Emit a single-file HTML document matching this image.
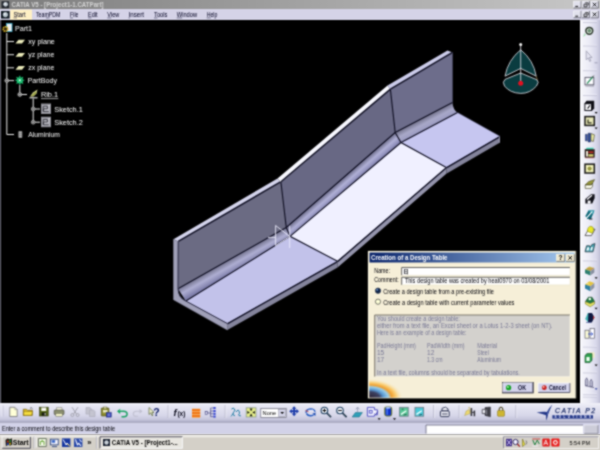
<!DOCTYPE html>
<html lang="en">
<head>
<meta charset="utf-8">
<title>CATIA V5 - [Project1-1.CATPart]</title>
<style>
html,body{margin:0;padding:0;background:#000;overflow:hidden}
body{width:600px;height:450px;position:relative;font-family:"Liberation Sans",sans-serif}
svg{position:absolute;left:0;top:0;display:block;overflow:hidden}
#all{filter:url(#blr)}
text{font-family:"Liberation Sans",sans-serif}
.t{font-size:6.6px;fill:#000020}
.tw{font-size:7.3px;fill:#fafafa}
.tg{font-size:6.6px;fill:#787894}
.td{font-size:6.8px;fill:#000008}
</style>
</head>
<body>
<svg width="600" height="450" viewBox="0 0 600 450">
<defs>
<filter id="blr" filterUnits="userSpaceOnUse" x="-5" y="-5" width="610" height="460" color-interpolation-filters="sRGB"><feConvolveMatrix order="3" kernelMatrix="1 2 1 2 6 2 1 2 1" divisor="18" edgeMode="duplicate" preserveAlpha="true"/></filter>
<linearGradient id="gtitle" x1="0" x2="1" y1="0" y2="0"><stop offset="0" stop-color="#7c7c7c"/><stop offset="1" stop-color="#c8c8c8"/></linearGradient>
<linearGradient id="gdlg" x1="0" x2="1" y1="0" y2="0"><stop offset="0" stop-color="#0a246a"/><stop offset="1" stop-color="#a6caf0"/></linearGradient>
<linearGradient id="gtb" x1="0" x2="0" y1="0" y2="1"><stop offset="0" stop-color="#f0f0f8"/><stop offset="0.250" stop-color="#e2e2f0"/><stop offset="0.600" stop-color="#d8d8ea"/><stop offset="0.800" stop-color="#c8c8de"/><stop offset="0.900" stop-color="#b8b8d0"/><stop offset="0.960" stop-color="#a0a0b8"/><stop offset="1" stop-color="#c4c4d8"/></linearGradient>
<linearGradient id="grt" x1="0" x2="1" y1="0" y2="0"><stop offset="0" stop-color="#f8f8fc"/><stop offset="0.450" stop-color="#ececf6"/><stop offset="0.800" stop-color="#d8d8ea"/><stop offset="1" stop-color="#c2c2d8"/></linearGradient>
<radialGradient id="gicon" gradientUnits="userSpaceOnUse" cx="369.2" cy="397.600" r="34" gradientTransform="translate(0 397.600) scale(1 0.560) translate(0 -397.600)">
<stop offset="0" stop-color="#2c2434"/><stop offset="0.300" stop-color="#3c4060"/><stop offset="0.420" stop-color="#5898d0"/><stop offset="0.560" stop-color="#98cce8"/><stop offset="0.660" stop-color="#f0a030"/><stop offset="0.800" stop-color="#fad078"/><stop offset="1" stop-color="#f6efd8" stop-opacity="0"/>
</radialGradient>
<linearGradient id="fg0" gradientUnits="userSpaceOnUse" x1="178.00" y1="288.70" x2="183.91" y2="299.16"><stop offset="0" stop-color="#7a7a96"/><stop offset="0.2" stop-color="#8a8aa8"/><stop offset="0.5" stop-color="#aeaed2"/><stop offset="0.8" stop-color="#9494bc"/><stop offset="1" stop-color="#8080ac"/></linearGradient>
<linearGradient id="fg1" gradientUnits="userSpaceOnUse" x1="286.30" y1="227.50" x2="293.01" y2="235.19"><stop offset="0" stop-color="#747492"/><stop offset="0.2" stop-color="#8686a6"/><stop offset="0.5" stop-color="#b0b0d6"/><stop offset="0.8" stop-color="#9898c2"/><stop offset="1" stop-color="#8484b0"/></linearGradient>
<linearGradient id="fg2" gradientUnits="userSpaceOnUse" x1="395.20" y1="132.50" x2="400.47" y2="142.57"><stop offset="0" stop-color="#76768e"/><stop offset="0.2" stop-color="#8686a2"/><stop offset="0.5" stop-color="#a8a8c8"/><stop offset="0.8" stop-color="#a0a0c4"/><stop offset="1" stop-color="#9898c0"/></linearGradient>
</defs>
<g id="all">

<!-- viewport -->
<rect x="-5" y="20" width="585" height="383" fill="#000"/>
<rect x="0" y="20" width="1" height="383" fill="#808090"/>

<!-- title bar -->
<rect x="0" y="-5" width="600" height="14" fill="url(#gtitle)"/><rect x="-5" y="-5" width="5.500" height="14" fill="#7c7c7c"/><rect x="599.500" y="-5" width="6" height="14" fill="#c8c8c8"/>
<rect x="1.500" y="1.200" width="7.600" height="7" fill="#20242c"/>
<circle cx="5.600" cy="4.300" r="2.400" fill="#c0c8d0"/><circle cx="5" cy="3.800" r="1" fill="#f0f4f8"/>
<text x="11.500" y="7.100" font-size="6.600" font-weight="bold" fill="#d4d4d4" textLength="92" lengthAdjust="spacingAndGlyphs">CATIA V5 - [Project1-1.CATPart]</text>
<g id="winbtn1">
<rect x="573.5" y="1.2" width="7.600" height="6.800" fill="#e0e0ec"/>
<path d="M573.5 8.0v-6.800h7.600" fill="none" stroke="#fcfcff" stroke-width="0.600"/>
<path d="M573.5 8.0h7.600v-6.800" fill="none" stroke="#484854" stroke-width="0.700"/>
<rect x="582" y="1.2" width="7.600" height="6.800" fill="#e0e0ec"/>
<path d="M582 8.0v-6.800h7.600" fill="none" stroke="#fcfcff" stroke-width="0.600"/>
<path d="M582 8.0h7.600v-6.800" fill="none" stroke="#484854" stroke-width="0.700"/>
<rect x="590.8" y="1.2" width="7.600" height="6.800" fill="#e0e0ec"/>
<path d="M590.8 8.0v-6.800h7.600" fill="none" stroke="#fcfcff" stroke-width="0.600"/>
<path d="M590.8 8.0h7.600v-6.800" fill="none" stroke="#484854" stroke-width="0.700"/>
<path d="M575.300 6.4h2.800" stroke="#000" stroke-width="0.900"/>
<path d="M584 4.2h3v2.600h-3z M585.200 2.8h3v2.600" fill="none" stroke="#000" stroke-width="0.700"/>
<path d="M592.800 2.8l3.600 3.600M596.400 2.8l-3.600 3.600" stroke="#000" stroke-width="0.900"/>
</g>

<!-- menu bar -->
<rect x="-5" y="9" width="610" height="11" fill="#d5d3e7"/>
<rect x="1" y="11" width="8.600" height="7.600" fill="#101820"/>
<circle cx="5.400" cy="14.600" r="2.600" fill="#b8c4cc"/><circle cx="4.800" cy="14" r="1" fill="#f0f4f8"/>
<rect x="10.200" y="9.600" width="21.800" height="10.200" fill="#fff0c4"/>
<g class="t">
<text x="13.5" y="17" textLength="12" lengthAdjust="spacingAndGlyphs">Start</text>
<text x="36" y="17" textLength="24.5" lengthAdjust="spacingAndGlyphs">TeamPDM</text>
<text x="70" y="17" textLength="8.5" lengthAdjust="spacingAndGlyphs">File</text>
<text x="88" y="17" textLength="9.5" lengthAdjust="spacingAndGlyphs">Edit</text>
<text x="107.3" y="17" textLength="12" lengthAdjust="spacingAndGlyphs">View</text>
<text x="128.5" y="17" textLength="15.5" lengthAdjust="spacingAndGlyphs">Insert</text>
<text x="154" y="17" textLength="13.5" lengthAdjust="spacingAndGlyphs">Tools</text>
<text x="176.7" y="17" textLength="20.5" lengthAdjust="spacingAndGlyphs">Window</text>
<text x="206.7" y="17" textLength="10.7" lengthAdjust="spacingAndGlyphs">Help</text>
</g>
<g stroke="#101030" stroke-width="0.5">
<path d="M13.5 18h3.5M46 18h3.5M70 18h3M88 18h3.5M107.3 18h4M128.5 18h1.5M154 18h3.5M176.7 18h5.5M206.7 18h4"/>
</g>
<g id="winbtn2">
<rect x="573.5" y="11" width="7.600" height="6.800" fill="#e0e0ec"/>
<path d="M573.5 17.8v-6.800h7.600" fill="none" stroke="#fcfcff" stroke-width="0.600"/>
<path d="M573.5 17.8h7.600v-6.800" fill="none" stroke="#484854" stroke-width="0.700"/>
<rect x="582" y="11" width="7.600" height="6.800" fill="#e0e0ec"/>
<path d="M582 17.8v-6.800h7.600" fill="none" stroke="#fcfcff" stroke-width="0.600"/>
<path d="M582 17.8h7.600v-6.800" fill="none" stroke="#484854" stroke-width="0.700"/>
<rect x="590.8" y="11" width="7.600" height="6.800" fill="#e0e0ec"/>
<path d="M590.8 17.8v-6.800h7.600" fill="none" stroke="#fcfcff" stroke-width="0.600"/>
<path d="M590.8 17.8h7.600v-6.800" fill="none" stroke="#484854" stroke-width="0.700"/>
<path d="M575.300 16.2h2.800" stroke="#000" stroke-width="0.900"/>
<path d="M584 14h3v2.600h-3z M585.200 12.6h3v2.600" fill="none" stroke="#000" stroke-width="0.700"/>
<path d="M592.800 12.6l3.600 3.600M596.400 12.6l-3.600 3.600" stroke="#000" stroke-width="0.900"/>
</g>

<!-- 3D model -->
<g id="model">
<polygon points="178.20,241.60 280.90,182.00 286.30,227.50 178.00,288.70" fill="#6b6b83"/>
<polygon points="178.00,288.70 286.30,227.50 290.00,236.30 185.80,301.00" fill="url(#fg0)"/>
<polygon points="185.80,301.00 290.00,236.30 337.50,261.30 227.30,323.50" fill="#c2c2ea"/>
<polygon points="227.30,323.50 337.50,261.30 337.50,267.60 227.30,330.00" fill="#84849c"/>
<polygon points="173.50,239.30 277.50,178.50 280.90,182.00 178.20,241.60" fill="#d4d4ec"/>
<line x1="178.2" y1="241.29999999999998" x2="280.9" y2="181.7" stroke="#101024" stroke-width="1.4"/>
<line x1="178.0" y1="288.7" x2="286.3" y2="227.5" stroke="#101024" stroke-width="1.1"/>
<line x1="185.8" y1="301.0" x2="290.0" y2="236.3" stroke="#101024" stroke-width="1.1"/>
<line x1="227.3" y1="323.8" x2="337.5" y2="261.6" stroke="#101024" stroke-width="1.4"/>
<polygon points="280.90,182.00 390.40,89.40 395.20,132.50 286.30,227.50" fill="#686884"/>
<polygon points="286.30,227.50 395.20,132.50 401.00,142.50 290.00,236.30" fill="url(#fg1)"/>
<polygon points="290.00,236.30 401.00,142.50 446.30,167.50 337.50,261.30" fill="#f0f0ff"/>
<polygon points="337.50,261.30 446.30,167.50 446.30,173.80 337.50,267.60" fill="#9494ac"/>
<polygon points="277.50,178.50 387.50,85.50 390.40,89.40 280.90,182.00" fill="#f8f8ff"/>
<line x1="280.9" y1="181.7" x2="390.4" y2="89.10000000000001" stroke="#101024" stroke-width="1.4"/>
<line x1="286.3" y1="227.5" x2="395.2" y2="132.5" stroke="#101024" stroke-width="1.1"/>
<line x1="290.0" y1="236.3" x2="401.0" y2="142.5" stroke="#101024" stroke-width="1.1"/>
<line x1="337.5" y1="261.6" x2="446.3" y2="167.8" stroke="#101024" stroke-width="1.4"/>
<polygon points="390.40,89.40 452.50,52.60 452.50,102.50 395.20,132.50" fill="#6d6d8b"/>
<polygon points="395.20,132.50 452.50,102.50 457.50,112.50 401.00,142.50" fill="url(#fg2)"/>
<polygon points="401.00,142.50 457.50,112.50 500.00,136.30 446.30,167.50" fill="#c6c6f0"/>
<polygon points="446.30,167.50 500.00,136.30 500.00,142.60 446.30,173.80" fill="#84849c"/>
<polygon points="387.50,85.50 447.50,50.50 452.50,52.60 390.40,89.40" fill="#ccccea"/>
<line x1="390.4" y1="89.10000000000001" x2="452.5" y2="52.300000000000004" stroke="#101024" stroke-width="1.4"/>
<line x1="395.2" y1="132.5" x2="452.5" y2="102.5" stroke="#101024" stroke-width="1.1"/>
<line x1="401.0" y1="142.5" x2="457.5" y2="112.5" stroke="#101024" stroke-width="1.1"/>
<line x1="446.3" y1="167.8" x2="500.0" y2="136.60000000000002" stroke="#101024" stroke-width="1.4"/>
<path d="M173.5,239.3 L178.2,241.6 L178.0,288.7 Q178.5,298.0 185.8,301.0 L227.3,323.5 L227.3,330.0 L173.5,299.7 Z" fill="#a0a0b8" stroke="#8a8aa2" stroke-width="0.5"/>
<path d="M178.2,241.6 L178.0,288.7 Q178.5,298.0 185.8,301.0 L227.3,323.5" fill="none" stroke="#20203a" stroke-width="0.9"/>
<polygon points="500.00,136.30 500.00,142.60 499.20,142.60 499.20,136.30" fill="#9a9ab2"/>
<polyline points="280.90,182.00 286.30,227.50 290.00,236.30 337.50,261.30" fill="none" stroke="#101024" stroke-width="1.1"/>
<polyline points="390.40,89.40 395.20,132.50 401.00,142.50 446.30,167.50" fill="none" stroke="#101024" stroke-width="1.1"/>
<polyline points="452.50,52.60 452.50,102.50 457.50,112.50 500.00,136.30" fill="none" stroke="#505070" stroke-width="0.5"/>
<g fill="none" stroke="#f0f0ff" stroke-width="0.9" opacity="0.95"><path d="M275.6 225.5V245.6M289.7 225.8V248M275.6 225.5L289.7 236.4L275.6 245.6M268 237.4H275.6"/></g>
<path d="M452.5,102.5 Q453.1,110.0 457.5,112.5 L458.5,111.5 L453.5,102.5 Z" fill="#000"/>
</g>


<!-- spec tree -->
<g id="tree">
<g stroke="#e8e8e8" stroke-width="1" fill="none">
<path d="M6.8 33V134.5H14"/>
<path d="M6.8 41.5H14M6.8 54.7H14M6.8 67.8H14M6.8 80.6H14"/>
<path d="M19.8 85V94.5H27"/>
<path d="M33.2 98.5V122.2H40M33.2 109H40"/>
</g>
<!-- Part1 icon -->
<rect x="6.5" y="23.5" width="5.5" height="8" fill="#f0f0f0" stroke="#40b0d0" stroke-width="0.8"/>
<circle cx="5.400" cy="29" r="2.300" fill="#302810" stroke="#dcb428" stroke-width="1.500" stroke-dasharray="1.300 0.500"/>
<text class="tw" x="15" y="30.6" textLength="17" lengthAdjust="spacingAndGlyphs">Part1</text>
<!-- planes -->
<g fill="#e8e8b8">
<polygon points="15.5,43.5 18.5,39.8 25,39.8 22,43.5"/>
<polygon points="15.5,56.7 18.5,53 25,53 22,56.7"/>
<polygon points="15.5,69.8 18.5,66.1 25,66.1 22,69.8"/>
</g>
<text class="tw" x="28.3" y="43.7" textLength="26.5" lengthAdjust="spacingAndGlyphs">xy plane</text>
<text class="tw" x="28.3" y="56.9" textLength="26" lengthAdjust="spacingAndGlyphs">yz plane</text>
<text class="tw" x="28.3" y="70" textLength="26" lengthAdjust="spacingAndGlyphs">zx plane</text>
<!-- PartBody -->
<circle cx="6.8" cy="80.6" r="1.9" fill="#606060" stroke="#d0d0d0" stroke-width="0.7"/>
<path d="M5.6 80.6h2.4" stroke="#e0e0e0" stroke-width="0.6"/>
<g stroke="#20c878" stroke-width="1.1" fill="none">
<circle cx="19.8" cy="80.3" r="2.6"/>
<path d="M19.8 75.8v9M15.3 80.3h9M16.6 77.1l6.4 6.4M23 77.1l-6.4 6.4"/>
</g>
<circle cx="19.8" cy="80.3" r="1" fill="#e8fff0"/>
<text class="tw" x="27.5" y="83" textLength="29.5" lengthAdjust="spacingAndGlyphs">PartBody</text>
<!-- Rib.1 -->
<circle cx="19.8" cy="94.5" r="1.9" fill="#606060" stroke="#d0d0d0" stroke-width="0.7"/>
<path d="M18.6 94.5h2.4" stroke="#e0e0e0" stroke-width="0.6"/>
<polygon points="30,96.5 33,92.5 37.5,89.5 36.5,93.5 33.5,96.5" fill="#dcdc98"/>
<polygon points="31,96 33.800,93 36.600,91.200 36,93.500 33.500,95.800" fill="#98a040"/>
<path d="M29.5 97.8h8" stroke="#f0f0f0" stroke-width="1.1"/>
<text class="tw" x="41" y="97" textLength="17" lengthAdjust="spacingAndGlyphs">Rib.1</text>
<path d="M41 98.6h17.3" stroke="#e0e0e0" stroke-width="0.7"/>
<!-- Sketch.1/2 -->
<g id="sk">
<circle cx="33.2" cy="109" r="1.9" fill="#303030" stroke="#d0d0d0" stroke-width="0.7"/>
<path d="M32 109h2.4M33.2 107.8v2.4" stroke="#e0e0e0" stroke-width="0.6"/>
<rect x="41" y="103.5" width="10" height="10.5" fill="#8c8c94"/>
<rect x="42.2" y="105" width="7.6" height="7.8" fill="#b8b8c0"/>
<path d="M43.2 111.6v-5.4h4.2v2.6h-4v2.8h5.4" fill="none" stroke="#303038" stroke-width="0.9"/>
<path d="M48.5 106l1.2-1.2" stroke="#f0f0f0" stroke-width="0.8"/>
</g>
<use href="#sk" y="13.2"/>
<text class="tw" x="54.3" y="111.5" textLength="28.5" lengthAdjust="spacingAndGlyphs">Sketch.1</text>
<text class="tw" x="54.3" y="124.7" textLength="28.5" lengthAdjust="spacingAndGlyphs">Sketch.2</text>
<!-- Aluminium -->
<rect x="18.3" y="131" width="4" height="7" rx="1" fill="#8a8a8a"/>
<path d="M19 132.5h2.6M19 134.5h2.6M19 136.5h2.6" stroke="#c8c8c8" stroke-width="0.6"/>
<text class="tw" x="28.3" y="137.2" textLength="31.5" lengthAdjust="spacingAndGlyphs">Aluminium</text>
</g>


<!-- compass -->
<g id="compass" stroke="#e8e8f0" stroke-width="0.800" stroke-linejoin="round">
<path d="M520.700 49.800Q508 60 505 76.200L520.700 68.400L536.200 76.200Q533.500 60 520.700 49.800Z" fill="#0a3c40"/>
<path d="M505 79.400L520.700 73L537 79.800Q539.500 82 536.500 86Q530 93.500 520.700 93.400Q510 93 504.500 86Q502 82 505 79.400Z" fill="#0a3c40"/>
<path d="M520.700 45V83" fill="none"/>
<path d="M536.200 76.200l1.200 3.600" fill="none" stroke="#c0a060" stroke-width="0.600"/>
</g>
<circle cx="520.700" cy="44.600" r="1.500" fill="#f4f4f4"/>
<circle cx="520.700" cy="83.200" r="2.500" fill="#e01020"/>

<!-- right toolbar -->
<rect x="580" y="20" width="20" height="383" fill="url(#grt)"/><rect x="599.500" y="20" width="6" height="383" fill="#c2c2d8"/>



<g id="rtools">
<path d="M583 21.800h14" stroke="#f8f8ff" stroke-width="0.700"/><path d="M583 22.500h14" stroke="#a8a8c0" stroke-width="0.500"/>
<!-- workbench gear -->
<circle cx="589.300" cy="30.800" r="3.400" fill="#e0f0e0" stroke="#283428" stroke-width="1.500"/>
<circle cx="589.300" cy="30.800" r="1.300" fill="#70b080" stroke="#283428" stroke-width="0.600"/>
<path d="M584.500 33l-1.500 4 3-2z" fill="#a8e0b8"/>
<path d="M583 45.300h14" stroke="#f8f8ff" stroke-width="0.700"/><path d="M583 46h14" stroke="#a8a8c0" stroke-width="0.500"/>
<!-- select -->
<path d="M586.200 50.800v9l2-1.800 1.500 3.400 1.200-.6-1.500-3.300h2.600z" fill="#e4e4f0" stroke="#9c9cb0" stroke-width="0.800"/>
<path d="M594.500 62.800h3" stroke="#9090a8" stroke-width="0.800"/>
<path d="M583 70h14" stroke="#f8f8ff" stroke-width="0.700"/><path d="M583 70.700h14" stroke="#a8a8c0" stroke-width="0.500"/>
<!-- sketcher -->
<rect x="585" y="77.400" width="8.800" height="7.400" fill="#fcfcff" stroke="#585868" stroke-width="0.900"/>
<path d="M587 83.600l5.600-6.600" stroke="#309060" stroke-width="1.300"/>
<path d="M592.200 77.400l1.600-1.800" stroke="#404040" stroke-width="1"/>
<path d="M585.400 86h8.600" stroke="#787888" stroke-width="0.700"/>
<path d="M583 94.800h14" stroke="#f8f8ff" stroke-width="0.700"/><path d="M583 95.500h14" stroke="#a8a8c0" stroke-width="0.500"/>
<!-- pad -->
<path d="M586.600 100.800h7.600v7.600l-2.400 2.600h-7.400v-7.400z" fill="#101018"/>
<path d="M585.400 104.200h5.600v5.800h-5.600z" fill="#fcfcff"/>
<path d="M587.600 108.600l2.400-3.400" stroke="#101018" stroke-width="1.100"/>
<path d="M594.600 112h3l-1.500 1.700z" fill="#000"/>
<!-- pocket -->
<rect x="585" y="116.600" width="9.300" height="8.800" fill="#e8e8b8" stroke="#181818" stroke-width="1.500"/>
<path d="M588 119.500v3.300h3.600" fill="none" stroke="#282818" stroke-width="1.200"/>
<path d="M594.600 127.600h3l-1.500 1.700z" fill="#000"/>
<!-- shaft -->
<path d="M585.400 134.400h2v6.400h-2z" fill="#3858b0" stroke="#182040" stroke-width="0.500"/>
<path d="M588.200 133.200h2.200v8.800h-2.200z" fill="#2848a0" stroke="#182040" stroke-width="0.500"/>
<path d="M591 133.600l3.400 1.200-1 6.600-2.400-.6z" fill="#f0f0a8" stroke="#303020" stroke-width="0.600"/>
<!-- groove -->
<path d="M585.400 149.800l1.400-2h7l-1 2z" fill="#40d0b0"/>
<rect x="585" y="149.600" width="9.300" height="8" fill="#281c18" stroke="#181010" stroke-width="0.500"/>
<path d="M586 151h2v5.600h-2z" fill="#e8e0d0"/>
<path d="M588.400 151.400h5v1.600h-5z" fill="#c03028"/>
<path d="M588.400 154.200h5v2.400h-5z" fill="#d8d070"/>
<path d="M585 158h9.300" stroke="#f08080" stroke-width="0.500"/>
<!-- hole -->
<rect x="585" y="164.200" width="9.300" height="8.800" fill="#f0f0b8" stroke="#181818" stroke-width="1.500"/>
<circle cx="589.600" cy="168.600" r="1.700" fill="#a0a040" stroke="#606020" stroke-width="0.500"/>
<!-- rib -->
<path d="M585.200 185l3.400-3.400 6-2-2 3.600-1.400 1.800z" fill="#98983c" stroke="#303010" stroke-width="0.500"/>
<path d="M585.200 185h6l1.400-1.800v3l-1.400 2.200h-6z" fill="#fcfcf0" stroke="#303010" stroke-width="0.600"/>
<!-- slot -->
<path d="M585.400 203.600v-4.600l5.600-4.800h3.600v4l-2.400 5.400z" fill="#101018"/>
<path d="M587 199.400l5-4.200" stroke="#fcfcff" stroke-width="1.300"/>
<rect x="587.600" y="200.600" width="3" height="3" fill="#fcfcff"/>
<!-- stiffener -->
<path d="M585.400 216l3-5.400h6l-3.400 8.400h-4z" fill="#106878"/>
<path d="M588 210.600h6.400l-1.400 3.600z" fill="#30a0b0"/>
<path d="M586 218.600l6.400-7.200" stroke="#fcfcff" stroke-width="1.200"/>
<path d="M589 219h3.400" stroke="#101018" stroke-width="1"/>
<!-- loft -->
<path d="M585 235.600l3.600-6.400h6.400l-3.600 6.400z" fill="#fcfcff" stroke="#282828" stroke-width="0.700"/>
<path d="M587.400 231.400q0-5 3.600-5.200q3 0.400 2.600 4.400l-1.400 2.600z" fill="#e8e828" stroke="#787810" stroke-width="0.500"/>
<!-- removed loft -->
<path d="M585 251.800l1.600-6h3l.6 1.600 1.600-2.800 3.200-1-2 8.200z" fill="#48a8b8" stroke="#182830" stroke-width="0.700"/>
<path d="M586.400 250.600l1-3.400h1.800l-.6 3.400z M590.400 250.600l.8-3.600h1.600l-.8 3.600z" fill="#fcfcff"/>
<path d="M583 260.200h14" stroke="#f8f8ff" stroke-width="0.700"/><path d="M583 260.900h14" stroke="#a8a8c0" stroke-width="0.500"/>
<!-- edge fillet -->
<path d="M585 269.400l4.400-2.900 5 1.700-4 2.800z" fill="#c4b448"/>
<path d="M585 269.400l5.400 1.600v4.600l-5.400-2.400z" fill="#308070"/>
<path d="M590.400 271l4-2.800v4.200l-4 3.200z" fill="#8890a0"/>
<path d="M587 268l3.600 1.800 3-2" fill="none" stroke="#d07050" stroke-width="0.600"/>
<path d="M594.600 277.300h3l-1.500 1.700z" fill="#000"/>
<!-- chamfer -->
<path d="M585 284.600l4.400-3.400 5 1.800-4 3.200z" fill="#e4c440"/>
<path d="M585 284.600l5.400 1.600v5l-5.400-2.600z" fill="#3080a0"/>
<path d="M590.400 286.200l4-3.200v4.600l-4 3.600z" fill="#8c94a4"/>
<path d="M586.400 283.400l3 .6" stroke="#f8e890" stroke-width="0.900"/>
<!-- draft -->
<path d="M585.400 301.600l3-4.400h3.600l2.600 4.400-4.400 2z" fill="#207840" stroke="#103018" stroke-width="0.500"/>
<circle cx="589.800" cy="299" r="1.300" fill="#f4fff4"/>
<path d="M585.400 301.600l4.800 2 4.400-2v2.400l-4.400 2.800-4.800-2.800z" fill="#e4e460" stroke="#606020" stroke-width="0.500"/>
<path d="M594.600 307.800h3l-1.500 1.700z" fill="#000"/>
<!-- shell -->
<path d="M585.200 319l2.600-6h2.400l-2.200 9z" fill="#40b0b0"/>
<path d="M588.400 313h3.600l2.400 4.200-2.600 5.200h-3.800z" fill="#101840"/>
<path d="M593 315.400l1.600 2-1.400 2.400z" fill="#c03030"/>
<path d="M586 322.400h5" stroke="#5060a0" stroke-width="0.800"/>
<!-- thickness -->
<rect x="585" y="330.200" width="4" height="8" fill="#fcfcd8" stroke="#606070" stroke-width="0.700"/>
<rect x="590" y="328.400" width="4.400" height="9.800" fill="#fcfcff" stroke="#606070" stroke-width="0.700"/>
<path d="M588 334h4.600M591.200 332.600l1.600 1.400-1.600 1.400" fill="none" stroke="#2040c0" stroke-width="0.800"/>
<path d="M583 346.400h14" stroke="#f8f8ff" stroke-width="0.700"/><path d="M583 347.100h14" stroke="#a8a8c0" stroke-width="0.500"/>
<!-- green cube -->
<path d="M588.600 352.400h5.800v5.400h-5.800z" fill="#f0f0c0"/>
<path d="M585 355.400l2-1.800h5v6.600l-2 2.400h-5z" fill="#30a050" stroke="#104020" stroke-width="0.600"/>
<path d="M586.400 357h3.200v4h-3.200z" fill="#f4fff4"/>
<path d="M594.600 364.600h3l-1.500 1.700z" fill="#000"/>
<path d="M583 372.200h14" stroke="#f8f8ff" stroke-width="0.700"/><path d="M583 372.900h14" stroke="#a8a8c0" stroke-width="0.500"/>
<!-- disabled -->
<g fill="#c8c8dc" stroke="#606080" stroke-width="0.800">
<path d="M585.400 385.600v-5.400l1.200-2.400 1.200 2.400v5.400z"/>
<path d="M590 386.600v-5l1.200-2.200 1.200 2.200v5z"/>
<path d="M585 385.600l9 2"/>
</g>
<path d="M594.600 388.200h3l-1.500 1.700z" fill="#3848a0"/>
<path d="M583 394h14" stroke="#f8f8ff" stroke-width="0.700"/><path d="M583 394.700h14" stroke="#a8a8c0" stroke-width="0.500"/>
<path d="M583 396.400h14" stroke="#f8f8ff" stroke-width="0.700"/><path d="M583 397.100h14" stroke="#a8a8c0" stroke-width="0.500"/>
</g>

<!-- bottom toolbar -->
<rect x="-5" y="403" width="610" height="20" fill="url(#gtb)"/>

<!-- bottom toolbar icons -->
<g id="btools">
<path d="M2.2 405.5v11" stroke="#f8f8ff" stroke-width="0.8"/><path d="M3 405.5v11" stroke="#a0a0b8" stroke-width="0.5"/>
<!-- new -->
<path d="M9.8 407.3h5l2.4 2.4v6.8h-7.4z" fill="#ffffd8" stroke="#606068" stroke-width="0.7"/>
<path d="M14.8 407.3v2.4h2.4" fill="none" stroke="#808088" stroke-width="0.5"/>
<!-- open -->
<path d="M23.3 409.3h3.2l1 1h4.8v5.2h-9z" fill="#e8c828" stroke="#705810" stroke-width="0.7"/>
<path d="M23.6 411.4h9l-1 4h-8z" fill="#f4dc40" stroke="#705810" stroke-width="0.5"/>
<path d="M30 408.2q1.6-1 2.6.6" fill="none" stroke="#202020" stroke-width="0.6"/>
<!-- save -->
<rect x="39.6" y="407.2" width="8.6" height="8.8" fill="#566818" stroke="#283008" stroke-width="0.6"/>
<rect x="41.3" y="407.6" width="5" height="3.4" fill="#f8f8f0"/>
<rect x="41.6" y="412.4" width="4.6" height="3.4" fill="#181c10"/>
<rect x="44.6" y="412.9" width="1.1" height="2.4" fill="#c8c8c0"/>
<!-- print -->
<path d="M56.5 407.5h5.5v3h-5.5z" fill="#f4f4e0" stroke="#707070" stroke-width="0.5"/>
<rect x="54.2" y="410" width="9.8" height="4.6" rx="0.8" fill="#8c9070" stroke="#404038" stroke-width="0.6"/>
<rect x="55.8" y="413.4" width="6.6" height="2.8" fill="#f4f4c8" stroke="#606050" stroke-width="0.5"/>
<!-- cut (disabled) -->
<g stroke="#a4a4b0" stroke-width="1" fill="none">
<path d="M72 407.2l4.6 7M78 407.2l-4.6 7"/>
<circle cx="72.4" cy="415" r="1.5"/><circle cx="77.6" cy="415" r="1.5"/>
</g>
<!-- copy (disabled) -->
<g fill="#c4c4d0" stroke="#a8a8b6" stroke-width="0.6">
<path d="M86 407.6h4l1.5 1.5v5h-5.5z"/><path d="M89.5 410h4l1.5 1.5v5h-5.5z"/>
</g>
<!-- paste -->
<rect x="101.3" y="408" width="7.6" height="8" rx="0.6" fill="#8c8c30" stroke="#404010" stroke-width="0.6"/>
<rect x="103.3" y="407" width="3.6" height="2" fill="#d8d8a0" stroke="#404010" stroke-width="0.4"/>
<rect x="103" y="410" width="4.5" height="2.5" fill="#e8e8c0"/>
<rect x="106.3" y="412.5" width="5" height="4.6" fill="#2838b0" stroke="#101860" stroke-width="0.4"/>
<path d="M107.3 414h3M107.3 415.4h3" stroke="#e0e0ff" stroke-width="0.5"/>
<!-- undo -->
<path d="M118 411.3h5.5q3.6 0 3.6 2.8t-3.6 2.6h-2" fill="none" stroke="#18a060" stroke-width="1.5"/>
<path d="M117 411.3l3.2-2.6v5.2z" fill="#18a060"/>
<path d="M119 410.3h4" stroke="#90e0b8" stroke-width="0.5"/>
<!-- redo (disabled) -->
<path d="M141.5 411.3h-5q-3.2 0-3.2 2.6t3.2 2.4h1.5" fill="none" stroke="#c0c0d0" stroke-width="1.100"/>
<path d="M142.5 411.3l-3-2.4v4.8z" fill="#c0c0d0"/>
<!-- what's this -->
<path d="M149 407.5v7l1.7-1.6 1.3 2.8 1-.5-1.2-2.7h2.2z" fill="#f0f0d0" stroke="#405020" stroke-width="0.6"/>
<text x="153.3" y="415.6" font-size="10.5" font-weight="bold" fill="#102068">?</text>
<path d="M168.2 405v13" stroke="#9898b0" stroke-width="0.6"/><path d="M168.9 405v13" stroke="#f8f8ff" stroke-width="0.6"/>
<!-- f(x) -->
<text x="173.6" y="415.8" font-size="9.5" font-weight="bold" font-style="italic" fill="#080818" font-family="Liberation Serif, serif">f</text>
<text x="177.4" y="416" font-size="6.5" font-weight="bold" fill="#080818" textLength="8" lengthAdjust="spacingAndGlyphs">(x)</text>
<!-- design table -->
<rect x="192" y="408.6" width="8.2" height="9.2" fill="#f8b870"/>
<rect x="192" y="409" width="8.2" height="2.2" fill="#f07818"/>
<rect x="192" y="412" width="8.2" height="2.2" fill="#f07818"/>
<rect x="192" y="415" width="8.2" height="2.2" fill="#f07818"/>
<!-- tree -->
<g stroke="#303070" stroke-width="0.6" fill="none">
<rect x="205.2" y="411.6" width="2.4" height="2.6" fill="#f0f0ff"/>
<path d="M207.6 413h3M210.6 408v8.6M210.6 408h3M210.6 411h3M210.6 413.8h3M210.6 416.6h3"/>
</g>
<g fill="#3040d0"><rect x="213.4" y="407" width="2.2" height="2"/><rect x="213.4" y="410" width="2.2" height="2"/><rect x="213.4" y="412.8" width="2.2" height="2"/><rect x="213.4" y="415.6" width="2.2" height="2"/></g>
<path d="M225.2 405v13" stroke="#9898b0" stroke-width="0.6"/><path d="M225.9 405v13" stroke="#f8f8ff" stroke-width="0.6"/>
<!-- fly -->
<g fill="none" stroke="#1878a0" stroke-width="1">
<path d="M231.5 409q2-1.6 3 0t-1 3.4q-2 2.6 1.4 3.4"/>
<path d="M236 412q2.4-3.4 3.2-0.6t-0.6 3.4q0 1.2 2.2 1"/>
</g>
<path d="M231 416.5l2-3" stroke="#1878a0" stroke-width="0.8"/>
<!-- fit all -->
<rect x="246.2" y="407.8" width="9.8" height="9.2" fill="#e4ec88" stroke="#8c9c90" stroke-width="0.8"/>
<g fill="#101010">
<path d="M251.1 411.2l-1.4-2.6h2.8z"/><path d="M251.1 413.6l-1.4 2.6h2.8z"/>
<path d="M249.9 412.4l-2.6-1.4v2.8z"/><path d="M252.3 412.4l2.6-1.4v2.8z"/>
</g>
<!-- dropdown -->
<rect x="260.8" y="408.4" width="25.4" height="9" fill="#fff" stroke="#686878" stroke-width="0.7"/>
<rect x="278.6" y="409.2" width="7" height="7.4" fill="#d4d4e8" stroke="#8c8c9c" stroke-width="0.5"/>
<path d="M280.3 411.9h3.8l-1.9 2.2z" fill="#000"/>
<text x="262.6" y="415.2" font-size="6.2" fill="#000" textLength="13.5" lengthAdjust="spacingAndGlyphs">None</text>
<!-- pan -->
<g fill="#1838a8">
<path d="M294.1 406.2l2.3 2.6h-4.6z"/><path d="M294.1 416.2l2.3-2.6h-4.6z"/>
<path d="M289.2 411.2l2.6-2.3v4.6z"/><path d="M299 411.2l-2.6-2.3v4.6z"/>
<rect x="293.2" y="408" width="1.8" height="6.4"/><rect x="291" y="410.3" width="6.2" height="1.8"/>
</g>
<!-- rotate -->
<path d="M306 413q0-4 4.6-4.2q4 0 4.4 3" fill="none" stroke="#2058c0" stroke-width="1.3"/>
<path d="M306.4 413.5q2.4 3.6 7 1.6" fill="none" stroke="#2058c0" stroke-width="1.5"/>
<path d="M315.6 412.4l-3.2 1.4l3 2.2z" fill="#1848b0"/>
<path d="M305.5 410.6l3 1" stroke="#c03030" stroke-width="0.9"/>
<path d="M308.6 410.8l4.5-.6" stroke="#f0f0ff" stroke-width="1"/>
<!-- zoom in/out -->
<g id="mag">
<path d="M326.8 413l4.2 4.2" stroke="#182838" stroke-width="1.7"/>
<path d="M327.4 413.6l3 3" stroke="#6088a0" stroke-width="0.6"/>
<circle cx="324.4" cy="410.5" r="3.3" fill="#f4f8ff" stroke="#204060" stroke-width="1.1"/>
<path d="M322.6 410.5h3.6" stroke="#000" stroke-width="1"/>
</g>
<path d="M324.4 408.7v3.6" stroke="#000" stroke-width="1"/>
<use href="#mag" x="15.6"/>
<!-- normal view -->
<path d="M352.2 417l3.2-4.4h7l-3.2 4.4z" fill="#30a0b8" stroke="#106078" stroke-width="0.5"/>
<path d="M357.6 412v-4.4M355.8 409.3l1.8-2.2 1.8 2.2" fill="none" stroke="#9098b0" stroke-width="0.8"/>
<!-- multi view -->
<g fill="#f4f4ff" stroke="#4848c0" stroke-width="0.9">
<path d="M367.4 407.4h7v2.4h3v5h-3v1.4h-7z"/>
<rect x="369.3" y="410.3" width="2.8" height="2.8"/>
</g>
<path d="M374.6 413.4l1.2 1.2 1.8-3" fill="none" stroke="#3030a0" stroke-width="0.8"/>
<path d="M377.6 418.2h3l-1.5 1.7z" fill="#000"/>
<!-- cylinder -->
<rect x="384.2" y="406.4" width="8" height="10" rx="2.4" fill="#68783c"/>
<rect x="385.4" y="407.2" width="5.6" height="8.4" rx="1.6" fill="#1030c8"/>
<rect x="386.4" y="408" width="1.6" height="6.8" fill="#4070f0"/>
<ellipse cx="388.2" cy="407.8" rx="2.6" ry="0.9" fill="#b0c8f8"/>
<path d="M393 418.2h3l-1.5 1.7z" fill="#000"/>
<!-- green box -->
<rect x="399.6" y="407.4" width="8.6" height="8.8" fill="#58c898" stroke="#70808c" stroke-width="0.9"/>
<path d="M401 414.4l5.4-3.6" stroke="#f4fff8" stroke-width="1.3"/>
<path d="M401.6 409.2h2M403.6 415l3-.6" stroke="#184838" stroke-width="0.8"/>
<!-- cyan box -->
<rect x="415" y="407.4" width="8.6" height="8.8" fill="#48c8d8" stroke="#70808c" stroke-width="0.9"/>
<path d="M416.4 414.4l5.4-3.6" stroke="#f4ffff" stroke-width="1.3"/>
<path d="M419 415l3-.6" stroke="#184048" stroke-width="0.8"/>
<path d="M433.6 405v13" stroke="#9898b0" stroke-width="0.6"/><path d="M434.3 405v13" stroke="#f8f8ff" stroke-width="0.6"/>
<!-- capture -->
<path d="M442 408.4l3.4-1.2 2.6 1.6v2.2h-6z" fill="#f0f0f8" stroke="#182040" stroke-width="0.8"/>
<rect x="440.4" y="411" width="8.8" height="5.6" rx="0.8" fill="#f4f4fc" stroke="#182040" stroke-width="0.9"/>
<path d="M442 414h5.6" stroke="#182040" stroke-width="0.9"/>
<path d="M459.2 405v13" stroke="#9898b0" stroke-width="0.6"/><path d="M459.9 405v13" stroke="#f8f8ff" stroke-width="0.6"/>
<!-- yellow/dark icon -->
<path d="M464.6 415.6l1.6-4.6 3-1.6 1 4.2z" fill="#ecd870" stroke="#a09040" stroke-width="0.4"/>
<path d="M468 408l1.6-.8 1 5" fill="none" stroke="#c8b860" stroke-width="0.7"/>
<path d="M471.4 408v8M474.4 410.4v5.8" stroke="#303038" stroke-width="1.5"/>
<path d="M471 412.4h4" stroke="#303038" stroke-width="0.9"/>
<!-- dark icon -->
<path d="M485 407.6l5.4-.6v9.8l-5.4-1.4z" fill="#404048" stroke="#202028" stroke-width="0.5"/>
<path d="M482.2 409.4h3.4v4.2h-3.4z" fill="#e8e8f0" stroke="#303038" stroke-width="0.7"/>
<path d="M486.6 409.6v5" stroke="#a8a8b8" stroke-width="0.7"/>
<!-- lock -->
<path d="M499.2 411v-2q0-1.8 1.8-1.8t1.8 1.8v2" fill="none" stroke="#403810" stroke-width="1"/>
<rect x="497.6" y="410.6" width="6.8" height="5.6" rx="0.6" fill="#dcc438" stroke="#806c10" stroke-width="0.6"/>
<path d="M498.6 412.4h4.8M498.6 414.2h4.8" stroke="#a89020" stroke-width="0.5"/>
<path d="M516 405v13" stroke="#9898b0" stroke-width="0.6"/><path d="M516.7 405v13" stroke="#f8f8ff" stroke-width="0.6"/>
<!-- CATIA P2 logo -->
<path d="M552.300 404.500q-3.400 3.600-5.400 7.400q-5-.4-10.300.700q5 1 9.300 2.700l.400 5.200q1.200-3 1.600-5.600q2-5.400 4.400-10.400z" fill="#243888"/>
<path d="M548.400 409.500l-1.200 5.500" stroke="#6880c8" stroke-width="0.500"/>
<text x="555" y="412.700" font-size="6.800" font-style="italic" fill="#24346c" stroke="#24346c" stroke-width="0.250" textLength="40" lengthAdjust="spacing">CATIA P2</text>
<rect x="552.400" y="415.200" width="40.600" height="3.400" fill="#243888"/>
<text x="554.400" y="418" font-size="3" font-weight="bold" fill="#e8e8ff" textLength="36.500" lengthAdjust="spacing">SOLUTIONS</text>
</g>

<!-- status bar -->
<rect x="-5" y="423" width="610" height="11.500" fill="#d2d2e8"/>
<text class="td" x="2" y="430.8" textLength="113" lengthAdjust="spacingAndGlyphs">Enter a comment to describe this design table</text>
<rect x="426" y="425" width="157" height="8.600" fill="#fff"/><path d="M426 433.600v-8.600h157" fill="none" stroke="#606078" stroke-width="0.800"/>
<rect x="584" y="425" width="14" height="8.600" fill="#ccccd8"/><path d="M584 433.600h14v-8.600" fill="none" stroke="#808090" stroke-width="0.800"/><path d="M584 433.600v-8.600h14" fill="none" stroke="#f0f0f8" stroke-width="0.600"/>
<!-- taskbar -->
<rect x="-5" y="434.500" width="610" height="20.500" fill="#d4d0c8"/>
<rect x="0" y="434.500" width="600" height="1.200" fill="#dcdad4"/><rect x="0" y="435.700" width="600" height="1.200" fill="#f4f2ee"/><rect x="0" y="436.900" width="600" height="1" fill="#dedbd4"/>


<!-- taskbar items -->
<g id="taskbar">
<rect x="2" y="436.800" width="28.500" height="11.600" fill="#d4d0c8"/>
<path d="M2 448.400v-11.600h28.500" fill="none" stroke="#fcfcff" stroke-width="0.800"/>
<path d="M2.200 448.300h28.200v-11.400" fill="none" stroke="#404050" stroke-width="0.900"/>
<path d="M5.500 440l2-1.400 2.400.6 2-1 .4 6.600-2 .8-2.400-.6-2 1.200z" fill="#181818"/>
<path d="M7 440.400l1.600.2v2l-1.600-.2z" fill="#d04020"/><path d="M9.200 440.200l1.600-.4v2l-1.600.4z" fill="#30a040"/>
<path d="M7 443l1.600.2v1.800l-1.600-.2z" fill="#3050d0"/><path d="M9.200 443l1.600-.4v1.800l-1.600.4z" fill="#e0c020"/>
<text x="12.800" y="445.200" font-size="6.800" font-weight="bold" fill="#000" textLength="15.800" lengthAdjust="spacingAndGlyphs">Start</text>
<path d="M34 436.500v12" stroke="#9090a8" stroke-width="0.600"/><path d="M34.700 436.500v12" stroke="#fcfcff" stroke-width="0.600"/>
<path d="M36.400 437.500v10" stroke="#fcfcff" stroke-width="0.800"/>
<!-- quick launch -->
<rect x="38.600" y="438.600" width="7.600" height="7.800" fill="#f4f8e8" stroke="#506048" stroke-width="0.800"/>
<path d="M40.400 445v-3.600h3.600v3.600M42.200 441.400v-1.600" fill="none" stroke="#60a030" stroke-width="0.900"/>
<rect x="50.400" y="439.200" width="7.800" height="5.600" fill="#f8f8ff" stroke="#304880" stroke-width="0.900"/>
<rect x="51.600" y="440.200" width="3.600" height="2.600" fill="#3868c8"/>
<path d="M52 446.600h5" stroke="#304880" stroke-width="0.900"/>
<rect x="62" y="438.400" width="8.400" height="8.600" fill="#1838a0"/>
<path d="M63 439.400l3.200 5.600.8-2 2.200 2.400" fill="none" stroke="#f8f8ff" stroke-width="1"/>
<path d="M67.500 444l2.500 2.600" stroke="#e0c040" stroke-width="1"/>
<rect x="74" y="438.400" width="8.400" height="8.600" fill="#2848a8"/>
<path d="M75.400 439.400l2 5.400 1.400-1.400 2.200 2.600" fill="none" stroke="#f8f8ff" stroke-width="1.100"/>
<path d="M79.500 439.500l2 2.500" stroke="#d8e0ff" stroke-width="1.200"/>
<text x="87.300" y="444.800" font-size="7.500" font-weight="bold" fill="#000">»</text>
<path d="M96.400 436.500v12" stroke="#9090a8" stroke-width="0.600"/><path d="M97.100 436.500v12" stroke="#fcfcff" stroke-width="0.600"/>
<!-- task button -->
<rect x="100" y="436.800" width="82.500" height="11.600" fill="#e8e6e0"/>
<path d="M100 448.400v-11.600h82.500" fill="none" stroke="#404050" stroke-width="0.900"/>
<path d="M100.200 448.300h82.200v-11.400" fill="none" stroke="#fcfcff" stroke-width="0.800"/>
<rect x="103" y="439" width="7" height="7" fill="#182030"/>
<circle cx="106.500" cy="442.500" r="2.200" fill="#c8d0d8"/>
<text x="111.800" y="445.200" font-size="6.600" font-weight="bold" fill="#000" textLength="66" lengthAdjust="spacingAndGlyphs">CATIA V5 - [Project1-...</text>
<!-- tray -->
<path d="M503.500 436.800v11.600" stroke="#707088" stroke-width="0.700"/>
<path d="M503.500 436.800h95" stroke="#707088" stroke-width="0.700"/>
<path d="M503.500 448.500h95v-11.600" fill="none" stroke="#fcfcff" stroke-width="0.700"/>
<g>
<rect x="506" y="438.800" width="6" height="7.400" fill="#403088"/>
<path d="M507 440l4 5M511 440l-4 5" stroke="#e0d0ff" stroke-width="0.900"/>
<circle cx="515.500" cy="442" r="2.600" fill="#f0f0ff" stroke="#302860" stroke-width="1"/>
<path d="M517.400 444l2.400 2.600" stroke="#a02020" stroke-width="1.300"/>
<path d="M522.500 439v7.500l2.500-2z" fill="#e8e040" stroke="#605810" stroke-width="0.500"/>
<path d="M526 440.500q1.500 2 0 4" fill="none" stroke="#404040" stroke-width="0.600"/>
<g transform="translate(1.800 0)">
<path d="M531 440l2 5 2.500-5 2 4" fill="none" stroke="#208040" stroke-width="1"/>
<path d="M530.500 439h8" stroke="#c02020" stroke-width="0.800"/>
<path d="M530.500 446h6" stroke="#f8f8ff" stroke-width="0.800"/>
<rect x="540.500" y="438.600" width="7.500" height="7.800" rx="1" fill="#e02020"/>
<path d="M542 445l2-5 2 5M542.800 443.400h2.600" fill="none" stroke="#fff" stroke-width="0.800"/>
<rect x="549.500" y="438.600" width="8.200" height="7.800" rx="1" fill="#e81818"/>
<circle cx="553.600" cy="442.500" r="2.400" fill="#fff0f0"/><circle cx="553.600" cy="442.500" r="1.200" fill="#e02020"/>
</g>
</g>
<text x="569.500" y="445" font-size="6" fill="#000" textLength="20.500" lengthAdjust="spacingAndGlyphs">5:54 PM</text>
</g>

<!-- dialog -->
<g id="dialog">
<rect x="368" y="251" width="208" height="147.5" fill="#f6efd8"/>
<rect x="368.3" y="251.3" width="207.4" height="146.9" fill="none" stroke="#fffbe8" stroke-width="0.8"/>
<path d="M368 398.5h208v-147.5" fill="none" stroke="#40403a" stroke-width="0.8"/>
<rect x="369.5" y="252.5" width="205" height="10" fill="url(#gdlg)"/>
<text x="371" y="260.2" font-size="7.2" font-weight="bold" fill="#fff" textLength="76.500" lengthAdjust="spacingAndGlyphs">Creation of a Design Table</text>

<!-- title buttons -->
<g>
<rect x="556.3" y="254.200" width="8.400" height="7.200" fill="#efe8d0" stroke="#fffbe8" stroke-width="0.500"/>
<path d="M556.3 261.400h8.400v-7.200" fill="none" stroke="#404040" stroke-width="0.6"/>
<text x="558.500" y="260.400" font-size="6.600" font-weight="bold" fill="#000">?</text>
<rect x="566" y="254.200" width="8.400" height="7.200" fill="#efe8d0" stroke="#fffbe8" stroke-width="0.500"/>
<path d="M566 261.400h8.400v-7.200" fill="none" stroke="#404040" stroke-width="0.6"/>
<path d="M568.400 256l3.600 3.600M572 256l-3.600 3.600" stroke="#000" stroke-width="0.900"/>
</g>
<!-- fields -->
<text class="td" x="374.3" y="273" textLength="15.700" lengthAdjust="spacingAndGlyphs">Name:</text>
<text class="td" x="374.3" y="282.200" textLength="24.400" lengthAdjust="spacingAndGlyphs">Comment:</text>
<rect x="401.700" y="267.500" width="168.300" height="7.800" fill="#fff"/>
<path d="M401.700 275.300v-7.800h168.300" fill="none" stroke="#505050" stroke-width="0.9"/>
<path d="M401.700 275.300h168.300v-7.800" fill="none" stroke="#e8e0c8" stroke-width="0.5"/>
<rect x="401.700" y="277.300" width="168.300" height="7.600" fill="#fff"/>
<path d="M401.700 284.900v-7.600h168.300" fill="none" stroke="#505050" stroke-width="0.9"/>
<path d="M401.700 284.900h168.300v-7.600" fill="none" stroke="#e8e0c8" stroke-width="0.5"/>
<text class="td" x="403.400" y="273.700">E</text>
<path d="M407.400 269v5.400" stroke="#000" stroke-width="0.6"/>
<text class="td" x="404.800" y="283.400" textLength="144.600" lengthAdjust="spacingAndGlyphs">This design table was created by heat0970 on 03/08/2001</text>
<!-- radios -->
<circle cx="378" cy="290.700" r="2.700" fill="#102448" stroke="#303848" stroke-width="0.6"/>
<circle cx="377.200" cy="289.800" r="1" fill="#6088c0"/>
<text class="td" x="383.200" y="293.600" textLength="110.800" lengthAdjust="spacingAndGlyphs">Create a design table from a pre-existing file</text>
<circle cx="378" cy="301.700" r="2.600" fill="#ffffd8" stroke="#404040" stroke-width="0.7"/>
<text class="td" x="383.200" y="304.500" textLength="131.300" lengthAdjust="spacingAndGlyphs">Create a design table with current parameter values</text>
<!-- info box -->
<rect x="374.700" y="315" width="195.300" height="61.700" fill="#d3d1cd"/>
<path d="M374.700 376.700v-61.700h195.300" fill="none" stroke="#706c60" stroke-width="0.9"/>
<path d="M374.700 376.700h195.300v-61.700" fill="none" stroke="#fffbe8" stroke-width="0.6"/>
<g class="tg">
<text x="376.900" y="321.400" textLength="83" lengthAdjust="spacingAndGlyphs">You should create a design table:</text>
<text x="376.900" y="328.100" textLength="175.600" lengthAdjust="spacingAndGlyphs">either from a text file, an Excel sheet or a Lotus 1-2-3 sheet (on NT).</text>
<text x="376.900" y="334.800" textLength="89.600" lengthAdjust="spacingAndGlyphs">Here is an example of a design table:</text>
<text x="376.900" y="348.200" textLength="39" lengthAdjust="spacingAndGlyphs">PadHeight (mm)</text>
<text x="427" y="348.200" textLength="37.500" lengthAdjust="spacingAndGlyphs">PadWidth (mm)</text>
<text x="477.300" y="348.200" textLength="19.700" lengthAdjust="spacingAndGlyphs">Material</text>
<text x="376.900" y="354.900">15</text>
<text x="427" y="354.900">12</text>
<text x="477.300" y="354.900" textLength="11.500" lengthAdjust="spacingAndGlyphs">Steel</text>
<text x="376.900" y="361.600">17</text>
<text x="427" y="361.600" textLength="15.500" lengthAdjust="spacingAndGlyphs">1.3 cm</text>
<text x="477.300" y="361.600" textLength="23.700" lengthAdjust="spacingAndGlyphs">Aluminium</text>
<text x="376.900" y="375" textLength="143" lengthAdjust="spacingAndGlyphs">In a text file, columns should be separated by tabulations.</text>
</g>
<!-- dialog corner icon -->
<g id="dlgicon">
<rect x="369.200" y="378" width="36" height="19.600" fill="url(#gicon)"/>
</g>
<!-- buttons -->
<g>
<rect x="502" y="382" width="31.600" height="11.300" fill="#101020"/>
<rect x="502.800" y="382.800" width="30" height="9.700" fill="#d2d2ea"/>
<path d="M502.800 392.500v-9.700h30" fill="none" stroke="#fcfcff" stroke-width="0.7"/>
<path d="M503 392.400h29.700v-9.500" fill="none" stroke="#606078" stroke-width="0.800"/>
<circle cx="508.600" cy="387.700" r="2.600" fill="#18a028"/>
<circle cx="507.900" cy="387" r="1" fill="#a0f0a0"/>
<text x="518" y="390" font-size="6.400" font-weight="bold" fill="#101030" textLength="8" lengthAdjust="spacingAndGlyphs">OK</text>
<rect x="538" y="383" width="32" height="9.600" fill="#d2d2ea"/>
<path d="M538 392.600v-9.600h32" fill="none" stroke="#fcfcff" stroke-width="0.800"/>
<path d="M538.200 392.500h31.700v-9.400" fill="none" stroke="#505068" stroke-width="0.900"/>
<circle cx="544.300" cy="387.700" r="2.400" fill="#c41c1c"/>
<circle cx="543.600" cy="387" r="1" fill="#ffb0a0"/>
<text x="549" y="390" font-size="6.400" font-weight="bold" fill="#101030" textLength="17" lengthAdjust="spacingAndGlyphs">Cancel</text>
</g>
</g>
</g>
</svg>
</body>
</html>
